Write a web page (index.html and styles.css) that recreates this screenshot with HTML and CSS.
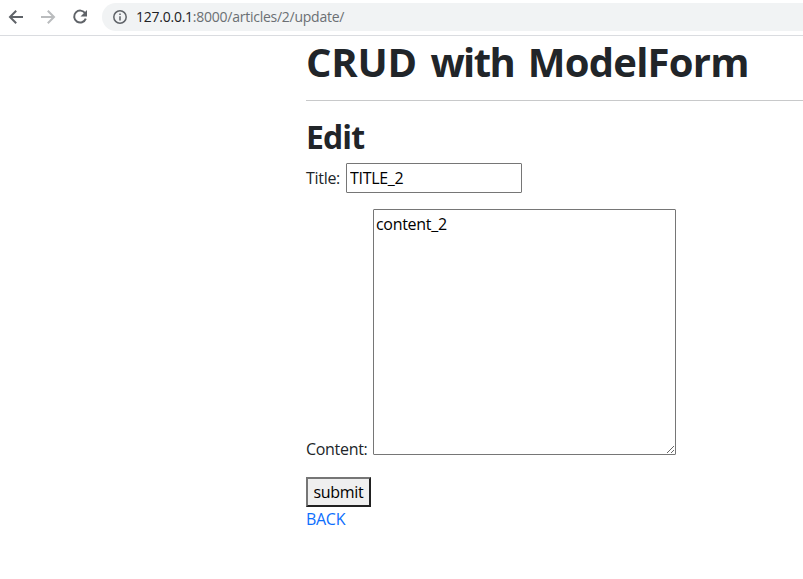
FILE: index.html
```html
<!DOCTYPE html>
<html lang="en">
<head>
<meta charset="utf-8">
<title>CRUD with ModelForm</title>
<link rel="stylesheet" href="styles.css">
</head>
<body>
<header class="toolbar">
  <svg class="nav" viewBox="0 0 16 16"><path d="M15 8H2.2M8.2 1.8L2 8l6.2 6.2"/></svg>
  <svg class="nav off" viewBox="0 0 16 16"><path d="M1 8h12.8M7.8 1.8L14 8l-6.2 6.2"/></svg>
  <svg class="nav" viewBox="0 0 16 16"><path d="M13.2 4.3A6 6 0 1 0 13.8 9.7"/><path class="solid" d="M15 1v6.5H8.5z"/></svg>
  <div class="address">
    <svg class="info" viewBox="0 0 14 14"><circle cx="7" cy="7" r="6.2"/><path d="M7 6.2v4.3M7 3.4v1.6"/></svg>
    <span class="url"><span class="host">127.0.0.1</span>:8000/articles/2/update/</span>
  </div>
</header>
<main class="container">
  <h1><span class="wide">CRUD</span> <span class="tight">with</span> ModelForm</h1>
  <hr>
  <h2>Edit</h2>
  <form>
    <p class="field"><label class="title-label" for="title">Title:</label><input id="title" type="text" value="TITLE_2"></p>
    <p class="field content"><label class="content-label" for="content">Content:</label><textarea id="content">content_2</textarea></p>
    <button type="button">submit</button>
  </form>
  <a href="#">BACK</a>
</main>
</body>
</html>
```
FILE: styles.css
```css
* { box-sizing: border-box; }
body {
  margin: 0;
  height: 579px;
  overflow: hidden;
  background: #fff;
  color: #212529;
  font: 16px/24px "Open Sans", "Noto Sans", sans-serif;
}
.toolbar {
  display: flex;
  align-items: center;
  height: 36px;
  padding: 0 0 2px 8px;
  border-bottom: 1px solid #dadce0;
}
.nav {
  flex: none;
  width: 16px;
  height: 16px;
  margin-right: 16px;
  fill: none;
  stroke: #5f6368;
  stroke-width: 2;
}
.off { stroke: #babcbe; }
.nav .solid { fill: #5f6368; stroke: none; }
.address {
  display: flex;
  align-items: center;
  flex: 1;
  height: 28px;
  margin-left: -2px;
  padding-left: 11px;
  border-radius: 14px 0 0 14px;
  background: #f1f3f4;
}
.info {
  width: 14px;
  height: 14px;
  margin-right: 9px;
  fill: none;
  stroke: #5f6368;
  stroke-width: 1.5;
}
.url { color: #6b6f73; font-size: 14px; letter-spacing: -0.25px; }
.host { color: #202124; }
.container { margin-left: 306px; }
h1, h2 { margin: 0; font-weight: 700; white-space: nowrap; }
h1 { height: 48px; padding-top: 2px; font-size: 40px; line-height: 48px; letter-spacing: -0.75px; word-spacing: 4px; }
.wide { letter-spacing: -0.25px; }
.tight { letter-spacing: -1.6px; }
hr { height: 1px; margin: 16px 0; border: 0; background: #c8c9ca; }
h2 { height: 38.4px; padding-top: 1px; margin-bottom: 8px; font-size: 32px; line-height: 38.4px; letter-spacing: -0.9px; }
.field { display: flex; margin: 0 0 16px; }
label { letter-spacing: -0.3px; }
.title-label { width: 40px; line-height: 30px; }
.content { align-items: flex-end; height: 252px; margin-bottom: 16px; }
.content-label { width: 67px; }
input, textarea, button {
  margin: 0;
  border-radius: 0;
  color: #000;
  font: inherit;
  letter-spacing: -0.3px;
}
input {
  width: 176px;
  height: 30px;
  padding: 1px 2px 1px 3px;
  border: 1px solid #767676;
  border-radius: 1px;
}
textarea {
  align-self: flex-start;
  width: 303px;
  height: 246px;
  padding: 2px;
  border: 1px solid #767676;
  border-radius: 1px;
  resize: vertical;
}
button {
  display: block;
  width: 65px;
  height: 30px;
  padding: 1px 0;
  border: 2px outset #767676;
  background: #efefef;
}
a { color: #0d6efd; text-decoration: none; letter-spacing: -0.3px; }
```
